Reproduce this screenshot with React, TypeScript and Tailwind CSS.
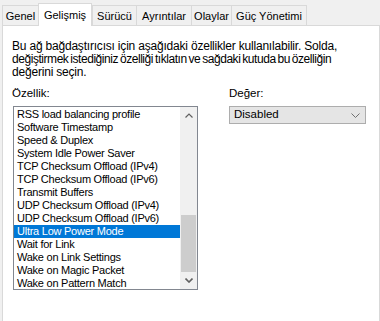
import { useState } from 'react';

const tabs = ['Genel', 'Gelişmiş', 'Sürücü', 'Ayrıntılar', 'Olaylar', 'Güç Yönetimi'];
const tabWidths = ['w-[36px]', 'w-[54px]', 'w-[44px]', 'w-[55px]', 'w-[40px]', 'w-[76px]'];

const props = [
  'RSS load balancing profile',
  'Software Timestamp',
  'Speed & Duplex',
  'System Idle Power Saver',
  'TCP Checksum Offload (IPv4)',
  'TCP Checksum Offload (IPv6)',
  'Transmit Buffers',
  'UDP Checksum Offload (IPv4)',
  'UDP Checksum Offload (IPv6)',
  'Ultra Low Power Mode',
  'Wait for Link',
  'Wake on Link Settings',
  'Wake on Magic Packet',
  'Wake on Pattern Match',
];

export default function App() {
  const [selected, setSelected] = useState('Ultra Low Power Mode');

  return (
    <div className="w-[380px] h-[321px] overflow-hidden bg-[#f0f0f0] pl-[2px] pt-[2px] text-[11px] text-black [font-family:'Liberation_Sans',Arial,sans-serif]">
      {/* tab strip */}
      <div className="flex items-end h-[23px]">
        {tabs.map((t, i) => {
          const active = i === 1;
          return (
            <div
              key={t}
              className={
                active
                  ? `relative z-10 ${tabWidths[i]} h-[23px] -mb-px bg-white border border-b-0 border-[#d9d9d9] flex items-start justify-center pt-[3px] whitespace-nowrap`
                  : `${tabWidths[i]} h-[20px] bg-[#f0f0f0] border-t border-l border-[#d9d9d9] flex items-start justify-center pt-[2px] whitespace-nowrap ${i === tabs.length - 1 ? 'border-r' : ''}`
              }
            >
              {t}
            </div>
          );
        })}
      </div>

      {/* page */}
      <div className="w-[378px] h-[300px] bg-white border border-[#d9d9d9] px-[9px] pt-[14px]">
        <div className="leading-[13px] text-[12px] whitespace-nowrap">
          <div className="tracking-[-0.2px]">
            Bu ağ bağdaştırıcısı için aşağıdaki özellikler kullanılabilir. Solda,
          </div>
          <div className="tracking-[-0.45px] [word-spacing:-1px]">
            değiştirmek istediğiniz özelliği tıklatın ve sağdaki kutuda bu özelliğin
          </div>
          <div className="tracking-[-0.2px]">değerini seçin.</div>
        </div>

        <div className="flex mt-[8px] text-[11.5px]">
          <div className="w-[185px]">
            <div className="leading-[13px] h-[13px]">Özellik:</div>
            <div className="mt-[6px] ml-px w-[185px] h-[184px] border border-[#828790] flex bg-white">
              <ul className="flex-1 pt-px text-[11px] tracking-[-0.25px]">
                {props.map((p) => (
                  <li
                    key={p}
                    onClick={() => setSelected(p)}
                    className={`h-[13px] leading-[13px] pl-[3px] whitespace-nowrap cursor-default ${
                      p === selected ? 'bg-[#0078d7] text-white' : ''
                    }`}
                  >
                    {p}
                  </li>
                ))}
              </ul>
              <div className="w-[17px] bg-[#f0f0f0] flex flex-col">
                <div className="h-[17px] flex items-center justify-center">
                  <svg width="8" height="5" viewBox="0 0 8 5">
                    <path d="M0.5 4.5 L4 1 L7.5 4.5" fill="none" stroke="#606060" strokeWidth="1.2" />
                  </svg>
                </div>
                <div className="h-[91px]" />
                <div className="h-[57px] mx-[1px] bg-[#cdcdcd]" />
                <div className="flex-1 flex items-center justify-center">
                  <svg width="8" height="5" viewBox="0 0 8 5">
                    <path d="M0.5 0.5 L4 4 L7.5 0.5" fill="none" stroke="#606060" strokeWidth="1.6" />
                  </svg>
                </div>
              </div>
            </div>
          </div>

          <div className="ml-[32px] w-[137px]">
            <div className="leading-[13px] h-[13px]">Değer:</div>
            <div className="mt-[6px] h-[18px] bg-[#e5e5e5] border border-[#adadad] flex items-center justify-between pl-[4px] pr-[5px]">
              <span>Disabled</span>
              <svg width="9" height="5" viewBox="0 0 9 5">
                <path d="M0.5 0.5 L4.5 4.5 L8.5 0.5" fill="none" stroke="#707070" strokeWidth="1" />
              </svg>
            </div>
          </div>
        </div>
      </div>
    </div>
  );
}
